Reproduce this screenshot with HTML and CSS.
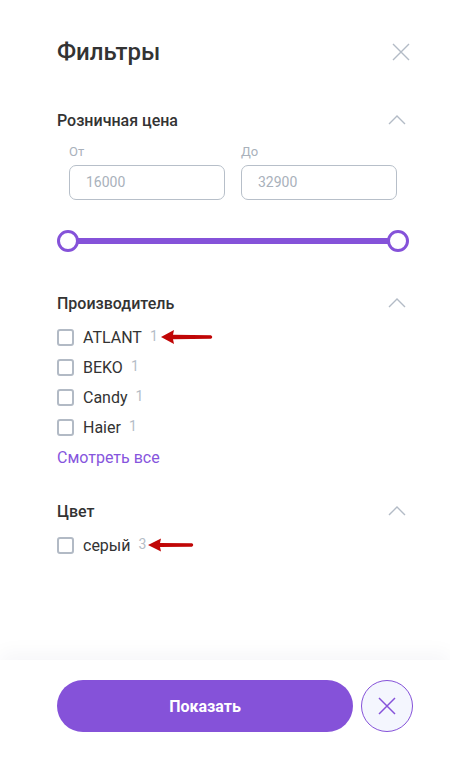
FILE: index.html
```html
<!DOCTYPE html>
<html lang="ru">
<head>
<meta charset="utf-8">
<link rel="stylesheet" href="styles.css">
</head>
<body>
<div class="page">
  <main class="panel">
    <header class="head">
      <h1 class="title">Фильтры</h1>
      <svg class="close" width="18" height="18" viewBox="0 0 18 18"><path d="M1 1L17 17M17 1L1 17" stroke="#b3bbc6" stroke-width="1.4" fill="none"/></svg>
    </header>

    <section class="group first">
      <div class="group-head">
        <span class="group-title">Розничная цена</span>
        <svg class="chev" width="18" height="10" viewBox="0 0 18 10"><path d="M1 9L9 1L17 9" stroke="#b3bbc6" stroke-width="1.4" fill="none"/></svg>
      </div>
      <div class="price">
        <label class="field">
          <span class="field-label">От</span>
          <span class="input">16000</span>
        </label>
        <label class="field">
          <span class="field-label">До</span>
          <span class="input">32900</span>
        </label>
      </div>
      <div class="slider">
        <span class="knob"></span>
        <span class="track"></span>
        <span class="knob"></span>
      </div>
    </section>

    <section class="group">
      <div class="group-head">
        <span class="group-title">Производитель</span>
        <svg class="chev" width="18" height="10" viewBox="0 0 18 10"><path d="M1 9L9 1L17 9" stroke="#b3bbc6" stroke-width="1.4" fill="none"/></svg>
      </div>
      <ul class="list">
        <li class="row"><span class="box"></span><span class="name">ATLANT</span><span class="count">1</span>
          <svg class="arrow" width="54" height="16" viewBox="0 0 54 16"><path d="M1 8L14 1L13 5.8L51 6.2Q53.5 8 51 9.8L13 10.2L14 15Z" fill="#c00606"/></svg>
        </li>
        <li class="row"><span class="box"></span><span class="name">BEKO</span><span class="count">1</span></li>
        <li class="row"><span class="box"></span><span class="name">Candy</span><span class="count">1</span></li>
        <li class="row"><span class="box"></span><span class="name">Haier</span><span class="count">1</span></li>
        <li class="row more">Смотреть все</li>
      </ul>
    </section>

    <section class="group">
      <div class="group-head">
        <span class="group-title">Цвет</span>
        <svg class="chev" width="18" height="10" viewBox="0 0 18 10"><path d="M1 9L9 1L17 9" stroke="#b3bbc6" stroke-width="1.4" fill="none"/></svg>
      </div>
      <ul class="list">
        <li class="row"><span class="box"></span><span class="name">серый</span><span class="count">3</span>
          <svg class="arrow arrow2" width="48" height="16" viewBox="0 0 48 16"><path d="M1 8L14 1.5L13 6L45 6.3Q47.5 8 45 9.7L13 10L14 14.5Z" fill="#c00606"/></svg>
        </li>
      </ul>
    </section>
  </main>

  <footer class="footer">
    <button class="show">Показать</button>
    <button class="reset"><svg width="18" height="18" viewBox="0 0 18 18"><path d="M1 1L17 17M17 1L1 17" stroke="#8552d9" stroke-width="1.5" fill="none"/></svg></button>
  </footer>
</div>
</body>
</html>
```

FILE: styles.css
```css
* { box-sizing: border-box; }
html, body { margin: 0; padding: 0; background: #fff; }
body { font-family: Roboto, "Noto Sans", Arial, sans-serif; color: #333; }

.page {
  height: 100vh;
  display: flex;
  flex-direction: column;
}

.panel {
  padding: 36px 41px 0 57px;
}

.head {
  display: flex;
  justify-content: space-between;
  align-items: center;
  height: 32px;
}
.title {
  margin: 0;
  font-size: 24px;
  line-height: 32px;
  font-weight: 500;
  color: #333;
}
.close { margin-right: -1px; }

.group.first { margin-top: 41px; }
.group + .group { margin-top: 40px; }
.group:last-child { margin-top: 28px; }

.group-head {
  display: flex;
  justify-content: space-between;
  align-items: center;
  height: 24px;
}
.group-title {
  font-size: 16px;
  font-weight: 500;
  line-height: 24px;
  color: #333;
}
.chev { margin-right: 3px; margin-top: -2px; }

.price {
  display: flex;
  gap: 16px;
  padding: 0 12px;
  margin-top: 11px;
}
.field {
  flex: 1;
  display: flex;
  flex-direction: column;
  gap: 5px;
}
.field-label {
  font-size: 13px;
  line-height: 16px;
  color: #a9b1bb;
}
.input {
  height: 35px;
  border: 1px solid #b7bfc9;
  border-radius: 7px;
  padding: 0 16px;
  font-size: 14px;
  line-height: 33px;
  color: #a9b1bb;
}

.slider {
  display: flex;
  align-items: center;
  margin-top: 30px;
  height: 22px;
}
.knob {
  width: 22px;
  height: 22px;
  border-radius: 50%;
  border: 3px solid #8552d9;
  background: #fff;
  flex: none;
}
.track {
  flex: 1;
  height: 6px;
  background: #8552d9;
  margin: 0 -1px;
}

.list {
  list-style: none;
  margin: 6px 0 0;
  padding: 0;
}
.row {
  display: flex;
  align-items: center;
  height: 30px;
  font-size: 16px;
}
.box {
  width: 17px;
  height: 17px;
  border: 2px solid #b2bac5;
  border-radius: 3px;
  flex: none;
  margin-right: 9px;
}
.name { color: #333; }
.count {
  margin-left: 8px;
  font-size: 14px;
  color: #b5bdc7;
  margin-top: -2px;
}
.arrow { margin-left: 2px; }
.arrow2 { margin-left: 1px; }
.more {
  color: #8655dd;
}

.footer {
  margin-top: auto;
  height: 112px;
  padding: 20px 37px 0 57px;
  display: flex;
  align-items: flex-start;
  gap: 8px;
  background: #fff;
  box-shadow: 0 -8px 18px rgba(30, 40, 80, 0.035);
}
.show {
  flex: 1;
  height: 52px;
  border: none;
  border-radius: 26px;
  background: #8552d9;
  color: #fff;
  font-family: Roboto, Arial, sans-serif;
  font-size: 16px;
  font-weight: 700;
}
.reset {
  width: 52px;
  height: 52px;
  flex: none;
  border-radius: 50%;
  border: 1px solid #8552d9;
  background: #f4f6fe;
  display: flex;
  align-items: center;
  justify-content: center;
  padding: 0;
}
```
